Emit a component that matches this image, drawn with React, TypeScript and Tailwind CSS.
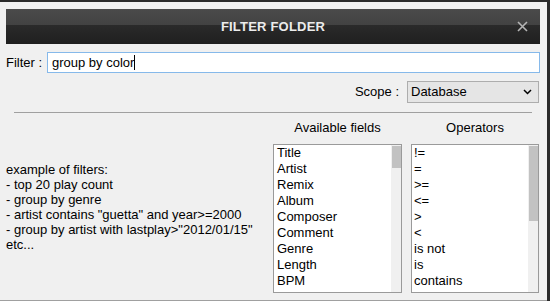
const CAMPOS = ["Title", "Artist", "Remix", "Album", "Composer", "Comment", "Genre", "Length", "BPM", "Year"];
const OPERADORES = ["!=", "=", ">=", "<=", ">", "<", "is not", "is", "contains", "does not contain"];
const EJEMPLOS = [
  "example of filters:",
  "- top 20 play count",
  "- group by genre",
  '- artist contains "guetta" and year>=2000',
  '- group by artist with lastplay>"2012/01/15"',
  "etc...",
];

function Lista({ items, ancho, thumb, pad }: { items: string[]; ancho: string; thumb: string; pad: string }) {
  return (
    <div className={`${ancho} h-[149px] border border-[#9a9a9a] bg-white flex overflow-hidden`}>
      <div className={`flex-1 ${pad} overflow-hidden`}>
        {items.map((t) => (
          <div key={t} className="leading-[16px] whitespace-nowrap">{t}</div>
        ))}
      </div>
      <div className="w-[10px] bg-[#f0f0f0] pt-[1px] pl-[1px]">
        <div className={`${thumb} bg-[#c2c2c2]`} />
      </div>
    </div>
  );
}

export default function App() {
  return (
    <div className="w-[550px] h-[301px] bg-[#2a2a2a] overflow-hidden font-['Liberation_Sans',Arial,sans-serif] text-[13px] text-black">
      <div className="w-[547px] h-[299px] mt-[2px] bg-[#f0f0f0] border-b border-[#a0a0a0] flex flex-col">
        {/* barra de título */}
        <div className="ml-[6px] mt-[7px] w-[534px] h-[35px] bg-[linear-gradient(to_bottom,#4a4a4a_0%,#424242_46%,#2a2a2a_47%,#1f1f1f_100%)] flex items-center justify-center relative">
          <span className="text-[#ececec] font-bold text-[13px] tracking-[0.2px]">FILTER FOLDER</span>
          <svg className="absolute right-[12px] top-[12px]" width="11" height="11" viewBox="0 0 11 11">
            <path d="M1 1L10 10M10 1L1 10" stroke="#b5b5b5" strokeWidth="1.6" />
          </svg>
        </div>

        {/* filtro */}
        <div className="mt-[8px] h-[21px] flex items-center">
          <span className="pl-[6px] w-[47px]">Filter :</span>
          <div className="w-[493px] h-[21px] border border-[#86b9ea] bg-white pl-[4px] flex items-center">
            <span>group by color</span>
            <span className="w-[1px] h-[15px] bg-black" />
          </div>
        </div>

        {/* ámbito */}
        <div className="mt-[8px] h-[22px] flex items-center justify-end pr-[8px]">
          <span className="mr-[8px]">Scope :</span>
          <div className="w-[132px] h-[22px] border border-[#adadad] bg-[#e5e5e5] flex items-center justify-between pl-[3px] pr-[6px]">
            <span>Database</span>
            <svg width="9" height="6" viewBox="0 0 9 6">
              <path d="M1 1L4.5 4.5L8 1" stroke="#000" strokeWidth="1.5" fill="none" />
            </svg>
          </div>
        </div>

        <div className="mt-[9px] ml-[14px] w-[518px] h-[1px] bg-[#a0a0a0]" />

        <div className="mt-[7px] flex">
          <div className="w-[273px] pl-[6px] pt-[42px]">
            {EJEMPLOS.map((t) => (
              <div key={t} className="leading-[15px] whitespace-nowrap">{t}</div>
            ))}
          </div>
          <div className="flex flex-col">
            <div className="h-[16px] leading-[16px] text-center mb-[8px]">Available fields</div>
            <Lista items={CAMPOS} ancho="w-[129px]" thumb="h-[22px]" pad="pl-[3px]" />
          </div>
          <div className="flex flex-col ml-[9px]">
            <div className="h-[16px] leading-[16px] text-center mb-[8px]">Operators</div>
            <Lista items={OPERADORES} ancho="w-[128px]" thumb="h-[75px]" pad="pl-[2px]" />
          </div>
        </div>
      </div>
    </div>
  );
}
